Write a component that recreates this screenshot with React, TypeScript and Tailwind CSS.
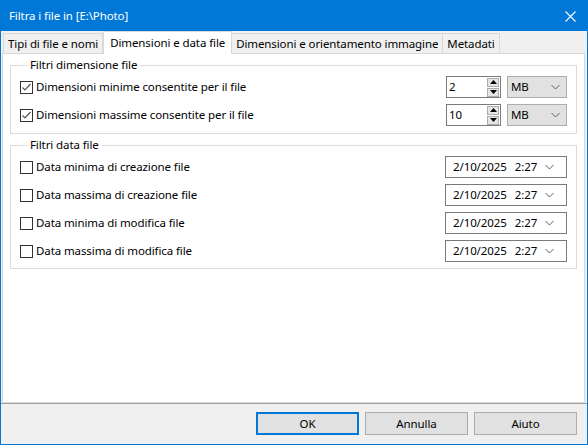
const FONT = { fontFamily: '"Noto Sans", "Open Sans", Arial, sans-serif' };

const TABS = [
  { label: "Tipi di file e nomi" },
  { label: "Dimensioni e data file", active: true },
  { label: "Dimensioni e orientamento immagine" },
  { label: "Metadati" },
];

const DATE_ROWS = [
  "Data minima di creazione file",
  "Data massima di creazione file",
  "Data minima di modifica file",
  "Data massima di modifica file",
];

function CheckBox({ checked }: { checked?: boolean }) {
  return (
    <div className="flex h-[13px] w-[13px] shrink-0 items-center justify-center border border-[#333333] bg-white">
      {checked && (
        <svg width="11" height="11" viewBox="0 0 11 11">
          <path d="M1.5 5.5 L4 8 L9.5 2" fill="none" stroke="#555555" strokeWidth="1.2" />
        </svg>
      )}
    </div>
  );
}

function Chevron() {
  return (
    <svg width="9" height="6" viewBox="0 0 9 6">
      <path d="M0.5 1 L4.5 5 L8.5 1" fill="none" stroke="#606060" strokeWidth="1" />
    </svg>
  );
}

function Spinner({ value }: { value: string }) {
  return (
    <div className="flex h-[22px] w-[55px] items-center border border-[#7a7a7a] bg-white pl-[2px] pr-px">
      <span className="flex-1 leading-none">{value}</span>
      <div className="flex flex-col gap-px">
        <div className="flex h-[9px] w-[12px] items-center justify-center border border-[#adadad] bg-[#e5e5e5]">
          <svg width="7" height="4" viewBox="0 0 7 4">
            <path d="M0 4 L3.5 0 L7 4 Z" fill="#000" />
          </svg>
        </div>
        <div className="flex h-[9px] w-[12px] items-center justify-center border border-[#adadad] bg-[#e5e5e5]">
          <svg width="7" height="4" viewBox="0 0 7 4">
            <path d="M0 0 L3.5 4 L7 0 Z" fill="#000" />
          </svg>
        </div>
      </div>
    </div>
  );
}

function Combo({ value }: { value: string }) {
  return (
    <div className="flex h-[22px] w-[60px] items-center justify-between border border-[#adadad] bg-[#e1e1e1] pl-[3px] pr-[6px]">
      <span className="leading-none">{value}</span>
      <Chevron />
    </div>
  );
}

function DatePicker() {
  return (
    <div className="flex h-[22px] w-[122px] items-center border border-[#7a7a7a] bg-white pl-[7px] pr-[12px]">
      <span className="leading-none">2/10/2025</span>
      <span className="ml-[8px] flex-1 leading-none">2:27</span>
      <Chevron />
    </div>
  );
}

function Button({ label, primary }: { label: string; primary?: boolean }) {
  return (
    <div
      className={`flex h-[23px] w-[103px] items-center justify-center bg-[#e1e1e1] ${
        primary ? "border-2 border-[#0078d7]" : "border border-[#adadad]"
      }`}
    >
      {label}
    </div>
  );
}

export default function App() {
  return (
    <div
      className="flex h-[445px] w-[588px] flex-col border border-[#0078d7] bg-[#f0f0f0] text-[11.5px] tracking-[-0.1px] text-black"
      style={FONT}
    >
      {/* Title bar */}
      <div className="flex h-[30px] shrink-0 items-center justify-between bg-[#0078d7] pl-[8px] pr-[11px] text-white">
        <span>Filtra i file in [E:\Photo]</span>
        <svg width="11" height="11" viewBox="0 0 11 11">
          <path d="M0.5 0.5 L10.5 10.5 M10.5 0.5 L0.5 10.5" stroke="#fff" strokeWidth="1.1" />
        </svg>
      </div>

      {/* Tabs */}
      <div className="flex h-[22px] shrink-0 items-end pl-[2px]">
        {TABS.map((t) =>
          t.active ? (
            <div
              key={t.label}
              className="relative z-10 -mb-px flex h-[23px] items-center whitespace-nowrap border border-b-0 border-[#d9d9d9] bg-white px-[6px]"
            >
              {t.label}
            </div>
          ) : (
            <div
              key={t.label}
              className="-ml-px flex h-[20px] items-center whitespace-nowrap border border-b-0 border-[#d9d9d9] bg-[#f0f0f0] px-[4px] first:ml-0"
            >
              {t.label}
            </div>
          )
        )}
      </div>

      {/* Tab page */}
      <div className="ml-px mr-[2px] flex flex-1 flex-col border border-[#d9d9d9] bg-white px-[7px] pt-[3px]">
        <fieldset className="border border-[#dcdcdc] pb-[7px] pl-[9px] pr-[9px] pt-[3px]">
          <legend className="ml-[7px] px-[3px] leading-[16px]">Filtri dimensione file</legend>
          <div className="flex flex-col gap-[6px]">
            {[
              ["Dimensioni minime consentite per il file", "2"],
              ["Dimensioni massime consentite per il file", "10"],
            ].map(([label, v]) => (
              <div key={label} className="flex h-[22px] items-center">
                <CheckBox checked />
                <span className="ml-[3px] flex-1">{label}</span>
                <Spinner value={v} />
                <div className="ml-[6px]">
                  <Combo value="MB" />
                </div>
              </div>
            ))}
          </div>
        </fieldset>

        <fieldset className="mt-[3px] border border-[#dcdcdc] pb-[6px] pl-[9px] pr-[9px] pt-[3px]">
          <legend className="ml-[7px] px-[3px] leading-[16px]">Filtri data file</legend>
          <div className="flex flex-col gap-[6px]">
            {DATE_ROWS.map((label) => (
              <div key={label} className="flex h-[22px] items-center">
                <CheckBox />
                <span className="ml-[3px] flex-1">{label}</span>
                <DatePicker />
              </div>
            ))}
          </div>
        </fieldset>
      </div>
      <div className="h-px shrink-0 bg-[#a0a0a0]" />

      {/* Buttons */}
      <div className="flex h-[40px] shrink-0 items-start justify-end gap-[6px] pr-[10px] pt-[8px]">
        <Button label="OK" primary />
        <Button label="Annulla" />
        <Button label="Aiuto" />
      </div>
    </div>
  );
}
